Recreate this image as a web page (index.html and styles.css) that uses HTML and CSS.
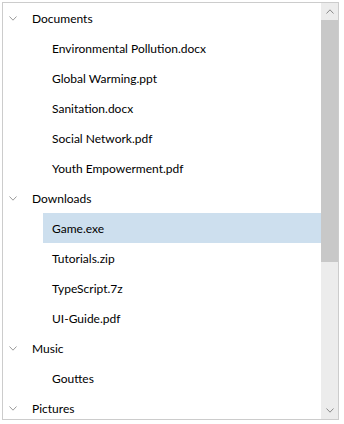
FILE: index.html
```html
<!DOCTYPE html>
<html>
<head>
<meta charset="utf-8">
<link rel="stylesheet" href="styles.css">
</head>
<body>
<div class="tree">
  <div class="content">
    <div class="node">
      <div class="row parent"><svg class="chev" width="8" height="5" viewBox="0 0 8 5"><path d="M0.5 0.5 L4 4.2 L7.5 0.5" /></svg><span>Documents</span></div>
      <div class="row child"><span>Environmental Pollution.docx</span></div>
      <div class="row child"><span>Global Warming.ppt</span></div>
      <div class="row child"><span>Sanitation.docx</span></div>
      <div class="row child"><span>Social Network.pdf</span></div>
      <div class="row child"><span>Youth Empowerment.pdf</span></div>
    </div>
    <div class="node">
      <div class="row parent"><svg class="chev" width="8" height="5" viewBox="0 0 8 5"><path d="M0.5 0.5 L4 4.2 L7.5 0.5" /></svg><span>Downloads</span></div>
      <div class="row child selected"><span>Game.exe</span></div>
      <div class="row child"><span>Tutorials.zip</span></div>
      <div class="row child"><span>TypeScript.7z</span></div>
      <div class="row child"><span>UI-Guide.pdf</span></div>
    </div>
    <div class="node">
      <div class="row parent"><svg class="chev" width="8" height="5" viewBox="0 0 8 5"><path d="M0.5 0.5 L4 4.2 L7.5 0.5" /></svg><span>Music</span></div>
      <div class="row child"><span>Gouttes</span></div>
    </div>
    <div class="node">
      <div class="row parent"><svg class="chev" width="8" height="5" viewBox="0 0 8 5"><path d="M0.5 0.5 L4 4.2 L7.5 0.5" /></svg><span>Pictures</span></div>
    </div>
  </div>
  <div class="scrollbar">
    <div class="sbtn"><svg width="8" height="5" viewBox="0 0 8 5"><path d="M0.5 4.5 L4 0.8 L7.5 4.5" /></svg></div>
    <div class="track"><div class="thumb"></div></div>
    <div class="sbtn"><svg width="8" height="5" viewBox="0 0 8 5"><path d="M0.5 0.5 L4 4.2 L7.5 0.5" /></svg></div>
  </div>
</div>
</body>
</html>
```
FILE: styles.css
```css
html, body {
  margin: 0;
  padding: 0;
  background: #ffffff;
}
body {
  padding: 2px;
}
.tree {
  width: 337px;
  height: 418px;
  box-sizing: border-box;
  border: 1px solid #cccccc;
  display: flex;
  overflow: hidden;
  font-family: "Lato", "Noto Sans", sans-serif;
  font-size: 12px;
  color: #000000;
}
.content {
  flex: 1;
  overflow: hidden;
}
.row {
  height: 30px;
  display: flex;
  align-items: center;
  white-space: nowrap;
}
.parent {
  padding-left: 6px;
}
.chev {
  width: 8px;
  height: 5px;
  margin-right: 15px;
  fill: none;
  stroke: #9a9a9a;
  stroke-width: 1;
}
.child {
  margin-left: 40px;
  padding-left: 9px;
}
.selected {
  background: #cddfee;
}
.scrollbar {
  width: 17px;
  flex: none;
  display: flex;
  flex-direction: column;
  background: #ececec;
}
.sbtn {
  height: 17px;
  flex: none;
  display: flex;
  align-items: center;
  justify-content: center;
}
.sbtn svg {
  fill: none;
  stroke: #8a8a8a;
  stroke-width: 1;
}
.track {
  flex: 1;
}
.thumb {
  height: 242px;
  background: #c8c8c8;
}
```
